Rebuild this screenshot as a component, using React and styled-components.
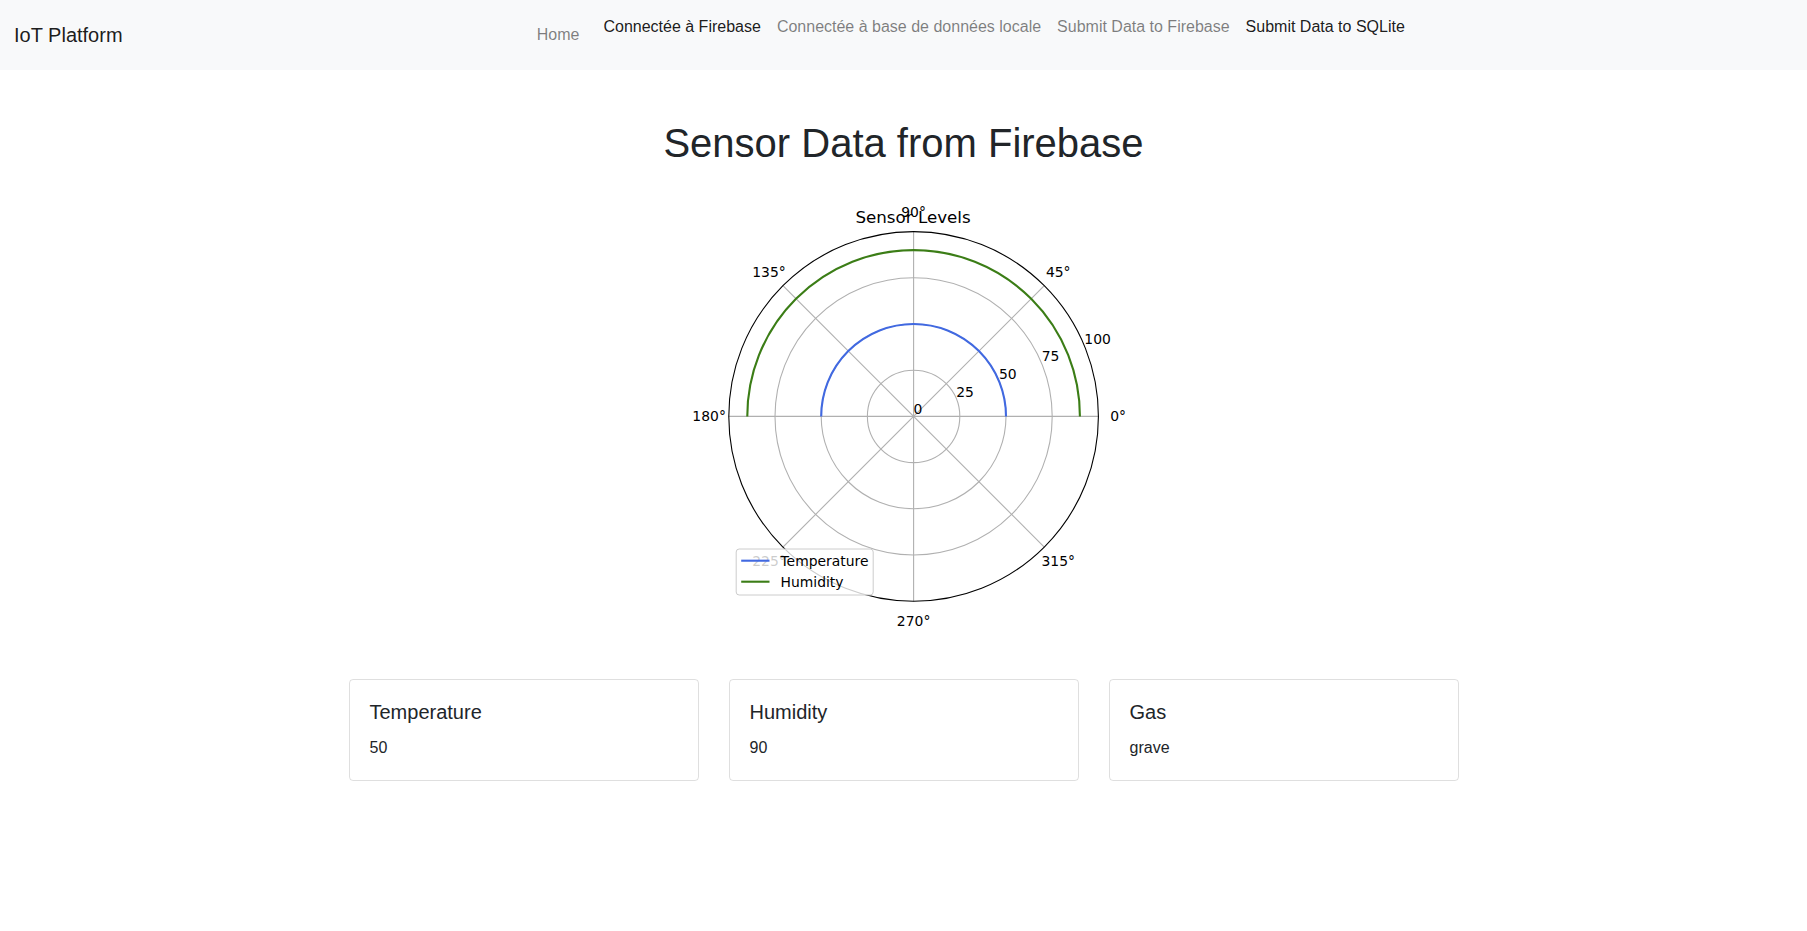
import React from "react";
import styled, { createGlobalStyle } from "styled-components";

const GlobalStyle = createGlobalStyle`
  body {
    margin: 0;
    font-family: "Liberation Sans", Arial, sans-serif;
    color: #212529;
    background: #fff;
  }
`;

const Navbar = styled.nav`
  display: flex;
  align-items: center;
  height: 70px;
  padding: 0 16px 0 14px;
  background: #f8f9fa;
  box-sizing: border-box;
`;
const Brand = styled.a`
  font-size: 20px;
  line-height: 30px;
  color: rgba(0, 0, 0, 0.9);
  text-decoration: none;
  margin-right: 28px;
`;
const Nav = styled.div`
  display: flex;
  align-items: center;
  margin: 0 auto;
`;
const NavLink = styled.a`
  font-size: 16px;
  line-height: 24px;
  padding: 0 8px;
  text-decoration: none;
  color: ${(p) => (p.active ? "rgba(0, 0, 0, 0.9)" : "rgba(0, 0, 0, 0.5)")};
`;
const HomeLink = styled(NavLink)`
  padding-right: 16px;
`;
const LinkGroup = styled.div`
  display: flex;
  margin-bottom: 16px;
`;

const Container = styled.main`
  max-width: 1140px;
  margin: 49px auto 0;
  padding: 0 15px;
  box-sizing: border-box;
`;
const Title = styled.h1`
  margin: 0 0 7px;
  font-size: 40px;
  font-weight: 500;
  line-height: 1.2;
  text-align: center;
`;
const Figure = styled.svg`
  display: block;
  margin: 0 auto;
  width: 640px;
  height: 480px;
  font-family: "DejaVu Sans", sans-serif;
`;
const Row = styled.div`
  display: grid;
  grid-template-columns: repeat(3, 1fr);
  gap: 30px;
  margin-top: 25px;
`;
const Card = styled.div`
  border: 1px solid rgba(0, 0, 0, 0.125);
  border-radius: 4px;
  padding: 20px;
`;
const CardTitle = styled.h5`
  margin: 0 0 12px;
  font-size: 20px;
  font-weight: 500;
  line-height: 1.2;
`;
const CardText = styled.p`
  margin: 0;
  font-size: 16px;
  line-height: 1.5;
`;

const CX = 329.6;
const CY = 242.4;
const R = 184.8;
const scale = R / 100;
const rad = (d) => (d * Math.PI) / 180;
const pt = (r, deg) => [CX + r * Math.cos(rad(deg)), CY - r * Math.sin(rad(deg))];

const series = [
  { label: "Temperature", value: 50, color: "#4169e1" },
  { label: "Humidity", value: 90, color: "#3b7d16" },
];

function PolarChart() {
  const angles = [0, 45, 90, 135, 180, 225, 270, 315];
  return (
    <Figure viewBox="0 0 640 480">
      {[25, 50, 75].map((v) => (
        <circle key={v} cx={CX} cy={CY} r={v * scale} fill="none" stroke="#b0b0b0" strokeWidth="1.1" />
      ))}
      {angles.map((a) => {
        const [x, y] = pt(R, a);
        return <line key={a} x1={CX} y1={CY} x2={x} y2={y} stroke="#b0b0b0" strokeWidth="1.1" />;
      })}
      <circle cx={CX} cy={CY} r={R} fill="none" stroke="#000" strokeWidth="1.1" />
      {series.map((s) => {
        const r = s.value * scale;
        return (
          <path
            key={s.label}
            d={`M ${CX + r} ${CY} A ${r} ${r} 0 0 0 ${CX - r} ${CY}`}
            fill="none"
            stroke={s.color}
            strokeWidth="2.1"
          />
        );
      })}
      {angles.map((a) => {
        const [x, y] = pt(204.5, a);
        return (
          <text key={a} x={x} y={y} fontSize="13.9" textAnchor="middle" dominantBaseline="central">
            {a}°
          </text>
        );
      })}
      {[0, 25, 50, 75, 100].map((v) => {
        const [x, y] = pt(v * scale, 22.5);
        return (
          <text key={v} x={x} y={y - 2} fontSize="13.9">
            {v}
          </text>
        );
      })}
      <text x="329" y="43" fontSize="16.7" textAnchor="middle" dominantBaseline="central">
        Sensor Levels
      </text>
      <rect x="152.2" y="375" width="137" height="46" rx="3" fill="rgba(255,255,255,0.8)" stroke="#cccccc" strokeWidth="1" />
      {series.map((s, i) => (
        <g key={s.label}>
          <line x1="157.2" x2="185.5" y1={386.7 + i * 21} y2={386.7 + i * 21} stroke={s.color} strokeWidth="2.1" />
          <text x="196.5" y={386.7 + i * 21} fontSize="13.9" dominantBaseline="central">
            {s.label}
          </text>
        </g>
      ))}
    </Figure>
  );
}

const sensors = [
  { name: "Temperature", value: "50" },
  { name: "Humidity", value: "90" },
  { name: "Gas", value: "grave" },
];

export default function App() {
  return (
    <>
      <GlobalStyle />
      <Navbar>
        <Brand href="#">IoT Platform</Brand>
        <Nav>
          <HomeLink href="#">Home</HomeLink>
          <LinkGroup>
            <NavLink active href="#">Connectée à Firebase</NavLink>
            <NavLink href="#">Connectée à base de données locale</NavLink>
            <NavLink href="#">Submit Data to Firebase</NavLink>
            <NavLink active href="#">Submit Data to SQLite</NavLink>
          </LinkGroup>
        </Nav>
      </Navbar>
      <Container>
        <Title>Sensor Data from Firebase</Title>
        <PolarChart />
        <Row>
          {sensors.map((s) => (
            <Card key={s.name}>
              <CardTitle>{s.name}</CardTitle>
              <CardText>{s.value}</CardText>
            </Card>
          ))}
        </Row>
      </Container>
    </>
  );
}
